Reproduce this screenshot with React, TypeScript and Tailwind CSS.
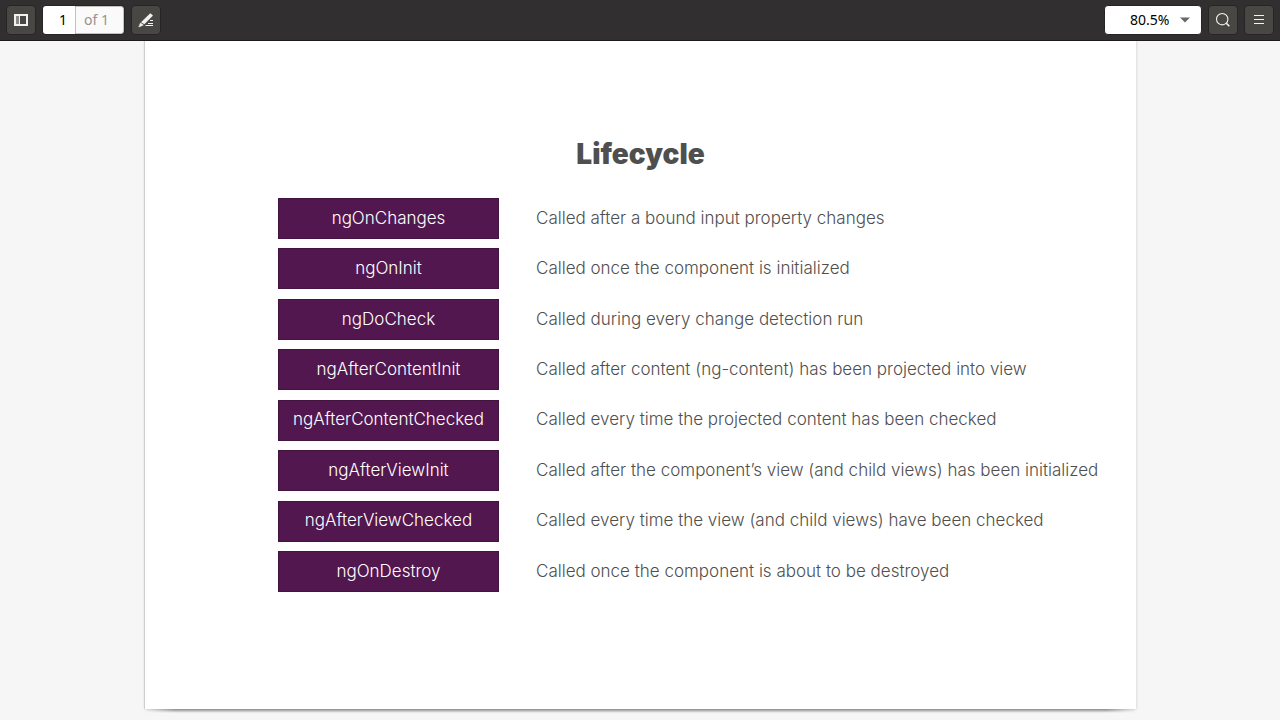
import type { ReactNode } from "react";

const hooks = [
  { name: "ngOnChanges", text: "Called after a bound input property changes" },
  { name: "ngOnInit", text: "Called once the component is initialized" },
  { name: "ngDoCheck", text: "Called during every change detection run" },
  { name: "ngAfterContentInit", text: "Called after content (ng-content) has been projected into view" },
  { name: "ngAfterContentChecked", text: "Called every time the projected content has been checked" },
  { name: "ngAfterViewInit", text: "Called after the component’s view (and child views) has been initialized" },
  { name: "ngAfterViewChecked", text: "Called every time the view (and child views) have been checked" },
  { name: "ngOnDestroy", text: "Called once the component is about to be destroyed" },
];

function ToolButton({ label, children }: { label: string; children: ReactNode }) {
  return (
    <button
      type="button"
      aria-label={label}
      className="flex size-[30px] shrink-0 items-center justify-center rounded border border-[#262425] bg-[#494744] text-[#f2f2f0]"
    >
      {children}
    </button>
  );
}

function Toolbar() {
  return (
    <header className="flex h-[41px] shrink-0 items-start justify-between border-b border-[#1c1b1b] bg-[#322f30] px-1.5 pt-[5px] font-['Noto_Sans','Open_Sans',sans-serif] text-sm">
      <div className="flex gap-1.5">
        <ToolButton label="Side pane">
          <svg width="16" height="16" viewBox="0 0 16 16">
            <path d="M1 2h14v12H1z" fill="currentColor" />
            <path d="M7 4h6v8H7z" fill="#494744" />
            <path d="M3 4h3v8H3z" fill="#8b8987" />
          </svg>
        </ToolButton>
        <div className="flex h-[30px] rounded border border-[#262425]">
          <input
            aria-label="Page number"
            defaultValue="1"
            className="w-8 rounded-l-[3px] bg-white pr-2 text-right text-black outline-none"
          />
          <span className="flex w-[49px] items-center rounded-r-[3px] border border-[#c4c2c0] bg-[#fafafa] pl-2 text-[#949391]">
            of 1
          </span>
        </div>
        <ToolButton label="Annotate">
          <svg width="16" height="16" viewBox="0 0 16 16">
            <path d="M12.3 1.2 15 3.6 6.4 12.2 3 10.2z" fill="currentColor" />
            <path d="M2.5 11 5.3 13 .8 15z" fill="currentColor" stroke="currentColor" strokeWidth=".6" />
            <path d="M12 8.5h3M10 11.5h5M7.5 13.5H15" stroke="currentColor" />
          </svg>
        </ToolButton>
      </div>
      <div className="flex gap-1.5">
        <div className="relative">
          <select
            aria-label="Zoom"
            className="h-[30px] w-[98px] appearance-none rounded border border-[#262425] bg-white pl-[25px] text-black outline-none"
          >
            <option>80.5%</option>
          </select>
          <svg className="pointer-events-none absolute top-3 right-3" width="10" height="6" viewBox="0 0 10 6">
            <path d="M0 .5h10L5 5.5z" fill="#6b6967" />
          </svg>
        </div>
        <ToolButton label="Search">
          <svg width="16" height="16" viewBox="0 0 16 16" fill="none" stroke="currentColor">
            <circle cx="7.2" cy="7.2" r="5.7" strokeWidth="1.1" />
            <path d="m11.3 11.3 3 3" strokeWidth="1.6" />
          </svg>
        </ToolButton>
        <ToolButton label="Menu">
          <svg width="16" height="16" viewBox="0 0 16 16" stroke="currentColor">
            <path d="M3 3.5h10M3 7.5h10M3 11.5h10" />
          </svg>
        </ToolButton>
      </div>
    </header>
  );
}

export default function App() {
  return (
    <div className="flex min-h-screen flex-col bg-[#f6f6f6]">
      <Toolbar />
      <main className="flex grow flex-col overflow-hidden pb-[11px] pl-px">
        <article className="relative mx-auto w-full max-w-[991px] grow bg-white pt-[93px] font-['Inter','Roboto',sans-serif] text-[#4f4f4f] shadow-[-1px_0_0_#cfcfcf,0_0_3px_rgba(0,0,0,0.2)]">
          <h1 className="text-center text-[28px] leading-10 font-black">Lifecycle</h1>
          <dl className="mt-6 flex h-[394px] flex-col justify-between pl-[133px] text-[17px] font-light">
            {hooks.map((hook) => (
              <div key={hook.name} className="flex h-[41px] items-center gap-[37px]">
                <dt className="flex h-full w-[221px] shrink-0 items-center justify-center border border-[#431342] bg-[#52174f] text-white">
                  {hook.name}
                </dt>
                <dd className="whitespace-nowrap">{hook.text}</dd>
              </div>
            ))}
          </dl>
          <div className="absolute inset-x-0 top-full h-1 bg-linear-to-b from-[#8c8c8c] to-transparent mask-x-from-97%" />
        </article>
      </main>
    </div>
  );
}
